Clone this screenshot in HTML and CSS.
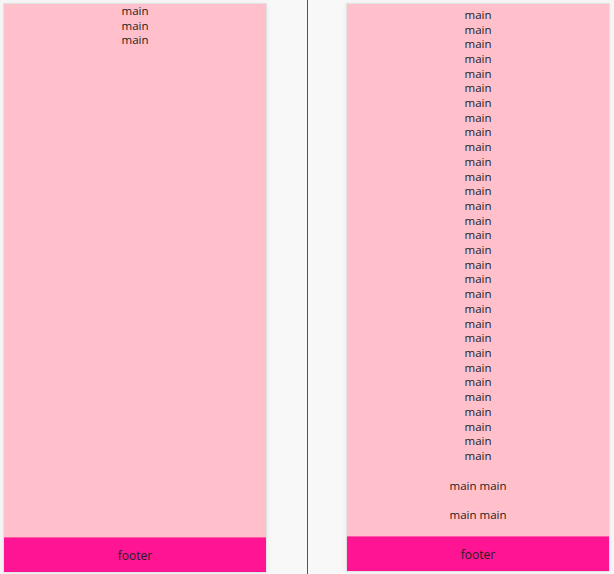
FILE: index.html
```html
<!DOCTYPE html>
<html>
<head>
<meta charset="utf-8">
<link rel="stylesheet" href="styles.css">
</head>
<body>
<div class="page">
  <div class="panel">
    <div class="main">
      <div class="line">main</div>
      <div class="line">main</div>
      <div class="line">main</div>
    </div>
    <div class="footer">footer</div>
  </div>
  <div class="divider"></div>
  <div class="panel panel-right">
    <div class="main main-end">
      <div class="line">main</div>
      <div class="line">main</div>
      <div class="line">main</div>
      <div class="line">main</div>
      <div class="line">main</div>
      <div class="line">main</div>
      <div class="line">main</div>
      <div class="line">main</div>
      <div class="line">main</div>
      <div class="line">main</div>
      <div class="line">main</div>
      <div class="line">main</div>
      <div class="line">main</div>
      <div class="line">main</div>
      <div class="line">main</div>
      <div class="line">main</div>
      <div class="line">main</div>
      <div class="line">main</div>
      <div class="line">main</div>
      <div class="line">main</div>
      <div class="line">main</div>
      <div class="line">main</div>
      <div class="line">main</div>
      <div class="line">main</div>
      <div class="line">main</div>
      <div class="line">main</div>
      <div class="line">main</div>
      <div class="line">main</div>
      <div class="line">main</div>
      <div class="line">main</div>
      <div class="line">main</div>
      <div class="line">main</div>
      <div class="line">main</div>
      <div class="line">main</div>
      <div class="line pair pair-first">main main</div>
      <div class="line pair">main main</div>
    </div>
    <div class="footer">footer</div>
  </div>
</div>
</body>
</html>
```
FILE: styles.css
```css
html, body {
  margin: 0;
  padding: 0;
  height: 100%;
  overflow: hidden;
}
body {
  background: #f8f8f8;
  font-family: "Open Sans", "Noto Sans", sans-serif;
  font-size: 11.5px;
  color: #222;
}
.page {
  display: flex;
  align-items: flex-start;
  height: 574px;
}
.panel {
  box-sizing: border-box;
  width: 264px;
  height: 570px;
  margin: 3px 0 0 3px;
  border: 1px solid #e2e2e2;
  box-shadow: 0 0 6px rgba(0, 0, 0, 0.06);
  display: flex;
  flex-direction: column;
  background: #ffc0cb;
}
.panel-right {
  height: 569px;
  margin-left: 0;
}
.main {
  flex: 1;
  min-height: 0;
  overflow: hidden;
  display: flex;
  flex-direction: column;
  text-align: center;
}
.main-end {
  justify-content: flex-end;
  padding-bottom: 13px;
}
.line {
  line-height: 14.7px;
  flex: none;
}
.pair {
  margin-top: 14.7px;
}
.pair-first {
  margin-top: 15.3px;
}
.footer {
  flex: none;
  height: 35px;
  background: #ff1493;
  border-top: 1px solid #ff5aa8;
  box-sizing: border-box;
  display: flex;
  align-items: center;
  justify-content: center;
  font-size: 12px;
}
.divider {
  width: 1px;
  height: 574px;
  background: #555;
  margin: 0 38px 0 40px;
  flex: none;
}
```
